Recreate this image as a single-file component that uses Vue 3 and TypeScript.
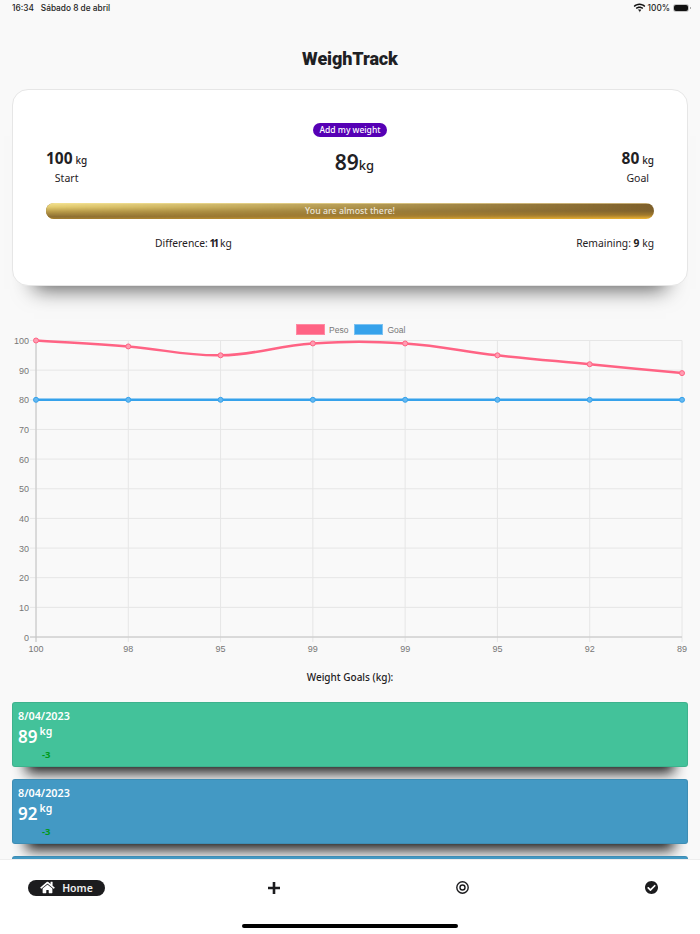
<script setup lang="ts">
import { computed } from 'vue'

const weights = [100, 98, 95, 99, 99, 95, 92, 89]
const goals = [80, 80, 80, 80, 80, 80, 80, 80]
const yTicks = [100, 90, 80, 70, 60, 50, 40, 30, 20, 10, 0]

const left = 36
const right = 682
const top = 340.5
const bottom = 637

const xAt = (i: number) => left + (i * (right - left)) / 7
const yAt = (v: number) => bottom - (v * (bottom - top)) / 100

// same spline chart.js draws with tension 0.4
function linePath(values: number[]) {
  const pts = values.map((v, i) => ({ x: xAt(i), y: yAt(v) }))
  let d = `M${pts[0].x} ${pts[0].y}`
  const clamp = (y: number) => Math.min(bottom, Math.max(top, y))
  const ctrl = (i: number) => {
    const p = pts[Math.max(i - 1, 0)]
    const c = pts[i]
    const n = pts[Math.min(i + 1, pts.length - 1)]
    const d1 = Math.hypot(c.x - p.x, c.y - p.y)
    const d2 = Math.hypot(n.x - c.x, n.y - c.y)
    const s1 = d1 / (d1 + d2)
    const s2 = d2 / (d1 + d2)
    return {
      px: c.x - 0.4 * s1 * (n.x - p.x),
      py: clamp(c.y - 0.4 * s1 * (n.y - p.y)),
      nx: c.x + 0.4 * s2 * (n.x - p.x),
      ny: clamp(c.y + 0.4 * s2 * (n.y - p.y)),
    }
  }
  for (let i = 1; i < pts.length; i++) {
    const a = ctrl(i - 1)
    const b = ctrl(i)
    d += ` C${a.nx} ${a.ny} ${b.px} ${b.py} ${pts[i].x} ${pts[i].y}`
  }
  return d
}

const weightPath = computed(() => linePath(weights))
const goalPath = computed(() => linePath(goals))

const entries = [
  { date: '8/04/2023', kg: 89, diff: -3, color: 'green' },
  { date: '8/04/2023', kg: 92, diff: -3, color: 'blue' },
]
</script>

<template>
  <div class="app">
    <div class="scroll">
      <div class="status">
        <div class="status-left"><span>16:34</span><span>Sábado 8 de abril</span></div>
        <div class="status-right">
          <svg width="13" height="10" viewBox="0 0 16 12">
            <path fill="#111" d="M8 2.3c2.3 0 4.4.9 6 2.4l1.2-1.3C13.300 1.600 10.800.5 8 .5S2.700 1.600.8 3.400L2 4.700c1.600-1.500 3.700-2.400 6-2.400zm0 3.700c1.300 0 2.500.5 3.400 1.300l1.200-1.300C11.400 4.900 9.800 4.200 8 4.200s-3.400.7-4.600 1.800l1.200 1.300C5.500 6.500 6.700 6 8 6zm0 3.600L5.900 8.300C6.500 7.900 7.200 7.700 8 7.700s1.500.2 2.100.6L8 11.500z"/>
          </svg>
          <span>100%</span>
          <div class="battery"></div>
        </div>
      </div>

      <h1 class="title">WeighTrack</h1>

      <div class="card">
        <div class="add-row"><button class="add-btn">Add my weight</button></div>
        <div class="stats">
          <div class="stat">
            <div class="stat-val"><b>100</b> <small>kg</small></div>
            <div class="stat-label">Start</div>
          </div>
          <div class="now"><b>89</b><small>kg</small></div>
          <div class="stat">
            <div class="stat-val"><b>80</b> <small>kg</small></div>
            <div class="stat-label">Goal</div>
          </div>
        </div>
        <div class="progress"><span>You are almost there!</span></div>
        <div class="totals">
          <span class="diff">Difference: <b class="tight">11</b> kg</span>
          <span>Remaining: <b>9</b> kg</span>
        </div>
      </div>

      <div class="chart">
        <div class="legend">
          <i class="swatch pink"></i><span>Peso</span>
          <i class="swatch sky"></i><span>Goal</span>
        </div>
        <svg class="plot" width="700" height="340" viewBox="0 320 700 340">
          <g stroke="#e6e6e6" stroke-width="1">
            <line v-for="t in yTicks" :key="t" :x1="left - 6" :x2="right" :y1="yAt(t)" :y2="yAt(t)" />
            <line v-for="(w, i) in weights" :key="i" :x1="xAt(i)" :x2="xAt(i)" :y1="top" :y2="bottom + 5" />
          </g>
          <line :x1="left" :x2="left" :y1="top" :y2="bottom + 5" stroke="#c4c4c4" />
          <line :x1="left - 6" :x2="right" :y1="bottom" :y2="bottom" stroke="#c4c4c4" />
          <text v-for="t in yTicks" :key="t" class="tick" :x="left - 7" :y="yAt(t) + 3.500" text-anchor="end">{{ t }}</text>
          <text v-for="(w, i) in weights" :key="i" class="tick" :x="xAt(i)" y="652" text-anchor="middle">{{ w }}</text>

          <path :d="goalPath" fill="none" stroke="#36a2eb" stroke-width="2.500" />
          <circle v-for="(g, i) in goals" :key="i" :cx="xAt(i)" :cy="yAt(g)" r="2.500" fill="#65b8f0" stroke="#36a2eb" />
          <path :d="weightPath" fill="none" stroke="#ff6384" stroke-width="2.500" />
          <circle v-for="(w, i) in weights" :key="i" :cx="xAt(i)" :cy="yAt(w)" r="2.500" fill="#ff9db2" stroke="#ff6384" />
        </svg>
      </div>

      <div class="goals-title">Weight Goals (kg):</div>

      <div class="entries">
        <div v-for="(e, i) in entries" :key="i" class="entry" :class="e.color">
          <div class="entry-date">{{ e.date }}</div>
          <div class="entry-kg"><span>{{ e.kg }}</span><sup>kg</sup></div>
          <div class="entry-diff">{{ e.diff }}</div>
        </div>
        <div class="entry blue"></div>
      </div>
    </div>

    <nav class="nav">
      <div class="nav-items">
        <div class="home-pill">
          <svg width="15" height="13" viewBox="0 0 576 512">
            <path fill="#fff" d="M280.37 148.26L96 300.11V464a16 16 0 0 0 16 16l112.06-.29a16 16 0 0 0 15.92-16V368a16 16 0 0 1 16-16h64a16 16 0 0 1 16 16v95.64a16 16 0 0 0 16 16.05L464 480a16 16 0 0 0 16-16V300L295.67 148.26a12.19 12.19 0 0 0-15.3 0zM571.6 251.47L488 182.56V44.05a12 12 0 0 0-12-12h-56a12 12 0 0 0-12 12v72.61L318.47 43a48 48 0 0 0-61 0L4.34 251.47a12 12 0 0 0-1.6 16.9l25.5 31A12 12 0 0 0 45.15 301l235.22-193.74a12.19 12.19 0 0 1 15.3 0L530.9 301a12 12 0 0 0 16.9-1.6l25.5-31a12 12 0 0 0-1.7-16.93z"/>
          </svg>
          <span>Home</span>
        </div>
        <svg class="nav-plus" width="12" height="12" viewBox="0 0 12 12">
          <path fill="#1c1c1e" d="M4.700 0h2.600v4.700H12v2.600H7.300V12H4.700V7.300H0V4.700h4.700z"/>
        </svg>
        <svg class="nav-target" width="13" height="13" viewBox="0 0 13 13">
          <circle cx="6.500" cy="6.500" r="5.700" fill="none" stroke="#1c1c1e" stroke-width="1.400"/>
          <circle cx="6.500" cy="6.500" r="2.500" fill="none" stroke="#1c1c1e" stroke-width="1.400"/>
        </svg>
        <svg class="nav-check" width="13" height="13" viewBox="8 8 496 496">
          <path fill="#1c1c1e" d="M504 256c0 136.967-111.033 248-248 248S8 392.967 8 256 119.033 8 256 8s248 111.033 248 248zM227.314 387.314l184-184c6.248-6.248 6.248-16.379 0-22.627l-22.627-22.627c-6.248-6.249-16.379-6.249-22.628 0L216 308.118l-70.059-70.059c-6.248-6.248-16.379-6.248-22.628 0l-22.627 22.627c-6.248 6.248-6.248 16.379 0 22.627l104 104c6.249 6.249 16.379 6.249 22.628.001z"/>
        </svg>
      </div>
      <div class="home-bar"></div>
    </nav>
  </div>
</template>

<style>
html, body {
  margin: 0;
  background: #f9f9f9;
}
</style>

<style scoped>
.app {
  width: 700px;
  height: 934px;
  display: flex;
  flex-direction: column;
  overflow: hidden;
  background: #f9f9f9;
  color: #1f2124;
  font-family: "Noto Sans", sans-serif;
}
.scroll {
  flex: 1;
  min-height: 0;
  overflow: hidden;
}
.status {
  height: 16px;
  display: flex;
  justify-content: space-between;
  align-items: center;
  padding: 0 11px 0 12px;
  font-family: Inter, sans-serif;
  font-size: 8.300px;
  font-weight: 500;
  color: #222;
}
.status-left {
  display: flex;
  gap: 7px;
}
.status-right {
  display: flex;
  align-items: center;
  gap: 2px;
}
.battery {
  position: relative;
  width: 14px;
  height: 6px;
  border-radius: 2px;
  background: #111;
  box-shadow: 0 0 0 1px #c4c4c4;
  margin: 0 1px 0 2px;
}
.battery::after {
  content: "";
  position: absolute;
  right: -3px;
  top: 2px;
  width: 1px;
  height: 2px;
  background: #aaa;
}
.title {
  margin: 31px 0 0;
  height: 42px;
  line-height: 24px;
  text-align: center;
  font-family: Roboto, sans-serif;
  font-size: 18px;
  font-weight: 900;
  letter-spacing: -0.1px;
  color: #1f2124;
}
.card {
  margin: 0 12px;
  height: 197px;
  box-sizing: border-box;
  padding: 33px 33px 0;
  background: #fff;
  border: 1px solid #e6e6e6;
  border-radius: 16px;
  box-shadow: 0 25px 20px -22px rgba(0, 0, 0, 0.65);
}
.add-row {
  display: flex;
  justify-content: center;
}
.add-btn {
  height: 14px;
  padding: 0 7px;
  border: none;
  border-radius: 7px;
  background: #5600b5;
  color: #fff;
  font-family: inherit;
  font-size: 8.500px;
  font-weight: 500;
  line-height: 14px;
}
.stats {
  display: flex;
  justify-content: space-between;
  margin-top: 9px;
}
.stat {
  text-align: center;
}
.stat-val {
  font-size: 11px;
  white-space: nowrap;
  height: 24px;
  line-height: 24px;
}
.stat-val b {
  font-size: 15.500px;
  font-weight: 700;
}
.stat-val small {
  font-size: 10px;
  font-weight: 500;
}
.stat-label {
  font-size: 10.500px;
  line-height: 16px;
}
.now {
  font-size: 13px;
  line-height: 30px;
  padding-top: 1px;
}
.now b {
  font-size: 21px;
  font-weight: 600;
}
.now small {
  font-size: 13px;
  font-weight: 500;
}
.progress {
  position: relative;
  height: 16px;
  margin-top: 17px;
  overflow: hidden;
  border-radius: 8px;
  background: linear-gradient(180deg, #efd9a0 0%, #7d5f2a 8%, #80622c 50%, #a27a2c 75%, #f2b733 100%);
  color: rgba(255, 255, 255, 0.8);
  text-align: center;
  font-size: 8.800px;
  font-weight: 500;
  line-height: 16px;
}
.progress::before {
  content: "";
  position: absolute;
  inset: 0;
  background: linear-gradient(180deg, #f5e494 0%, #e4cc70 25%, #b89a48 55%, #8d6f33 85%, #a07c30 100%);
  -webkit-mask-image: linear-gradient(90deg, #000, transparent);
  mask-image: linear-gradient(90deg, #000, transparent);
}
.progress span {
  position: relative;
}
.totals {
  display: flex;
  justify-content: space-between;
  margin-top: 16px;
  font-size: 10.300px;
  line-height: 16px;
}
.diff {
  margin-left: 109px;
  word-spacing: -1px;
}
.totals b {
  font-weight: 700;
}
.totals b.tight {
  letter-spacing: -2px;
  margin-right: 1px;
}
.chart {
  height: 340px;
  margin-top: 34px;
  position: relative;
}
.legend {
  position: absolute;
  top: 4px;
  left: 296px;
  display: flex;
  align-items: center;
  height: 11px;
  font-family: "Liberation Sans", sans-serif;
  font-size: 8.500px;
  color: #777;
}
.swatch {
  display: block;
  width: 29px;
  height: 11px;
  margin-right: 4px;
  box-sizing: border-box;
}
.swatch.pink {
  background: #ff6384;
  border: 1px solid #ff8aa3;
}
.swatch.sky {
  background: #36a2eb;
  border: 1px solid #7cc2f1;
  margin-left: 6px;
}
.plot {
  display: block;
}
.tick {
  font-family: "Liberation Sans", sans-serif;
  font-size: 9px;
  fill: #777;
}
.goals-title {
  margin-top: 9px;
  text-align: center;
  font-size: 10px;
  font-weight: 500;
  line-height: 16px;
}
.entries {
  margin: 17px 12px 0;
  display: flex;
  flex-direction: column;
  gap: 12px;
}
.entry {
  height: 65px;
  flex: none;
  box-sizing: border-box;
  padding: 6px 5px 0;
  border-radius: 3px;
  border: 1px solid rgba(0, 0, 0, 0.08);
  color: #fff;
  box-shadow: 0 20px 14px -14px rgba(0, 0, 0, 0.9);
}
.entry.green {
  background: #43c29a;
}
.entry.blue {
  background: #4399c4;
}
.entry-date {
  font-size: 10.800px;
  font-weight: 600;
  line-height: 14px;
}
.entry-kg {
  display: flex;
  line-height: 24px;
  margin-top: 2px;
}
.entry-kg span {
  font-size: 17px;
  font-weight: 600;
}
.entry-kg sup {
  font-size: 10.500px;
  font-weight: 600;
  line-height: 13px;
  margin-left: 2px;
}
.entry-diff {
  margin-left: 24px;
  font-size: 9.500px;
  font-weight: 700;
  line-height: 11px;
  color: #009a1a;
}
.nav {
  height: 75px;
  flex: none;
  background: #fff;
  border-top: 1px solid #eee;
  box-sizing: border-box;
  position: relative;
}
.nav-items {
  display: flex;
  align-items: center;
  height: 55px;
  padding-left: 28px;
}
.home-pill {
  width: 77px;
  height: 16px;
  border-radius: 8px;
  background: #1c1c1e;
  color: #eee;
  display: flex;
  align-items: center;
  justify-content: center;
  gap: 7px;
  font-size: 10.500px;
  font-weight: 600;
}
.nav-plus {
  margin-left: 163px;
}
.nav-target {
  margin-left: 176px;
}
.nav-check {
  margin-left: 176px;
}
.home-bar {
  width: 216px;
  height: 4px;
  margin: 9px auto 0;
  border-radius: 2px;
  background: #000;
}
</style>
